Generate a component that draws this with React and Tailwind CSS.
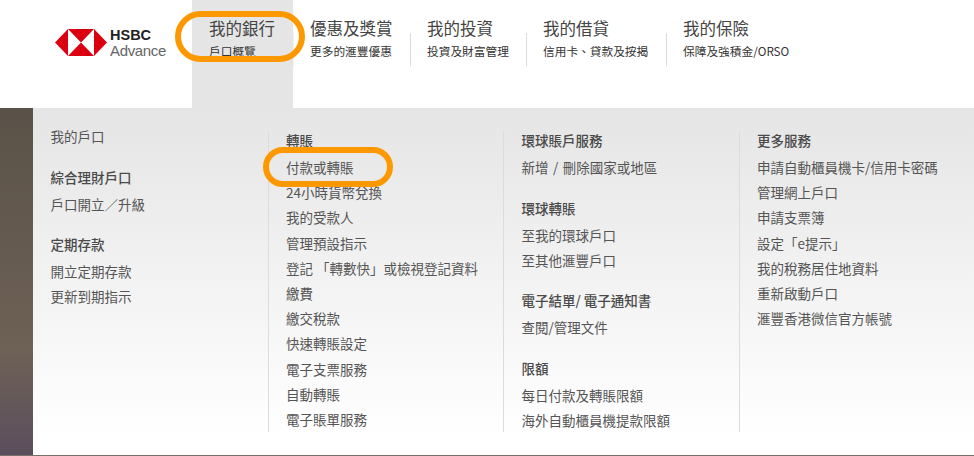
const navItems = [
  { title: "優惠及獎賞", sub: "更多的滙豐優惠", width: "w-[117px]" },
  { title: "我的投資", sub: "投資及財富管理", width: "w-[116px]" },
  { title: "我的借貸", sub: "信用卡、貸款及按揭", width: "w-[140px]" },
  { title: "我的保險", sub: "保障及強積金/ORSO", width: "w-[200px]" },
];

const transferLinks = [
  "付款或轉賬",
  "24小時貨幣兌換",
  "我的受款人",
  "管理預設指示",
  "登記 「轉數快」或檢視登記資料",
  "繳費",
  "繳交稅款",
  "快速轉賬設定",
  "電子支票服務",
  "自動轉賬",
  "電子賬單服務",
];

const moreLinks = [
  "申請自動櫃員機卡/信用卡密碼",
  "管理網上戶口",
  "申請支票簿",
  "設定「e提示」",
  "我的稅務居住地資料",
  "重新啟動戶口",
  "滙豐香港微信官方帳號",
];

const globalGroups = [
  { title: "環球賬戶服務", links: ["新增 / 刪除國家或地區"], gap: "mt-[-2px]" },
  { title: "環球轉賬", links: ["至我的環球戶口", "至其他滙豐戶口"], gap: "mt-[18px]" },
  { title: "電子結單/ 電子通知書", links: ["查閱/管理文件"], gap: "mt-[16px]" },
  { title: "限額", links: ["每日付款及轉賬限額", "海外自動櫃員機提款限額"], gap: "mt-[18px]" },
];

function Logo() {
  return (
    <div className="flex items-start gap-[3px]">
      <svg width="52" height="27" viewBox="0 0 52 27">
        <path d="M0 13.5 13 0v27z" fill="#db0011" />
        <path d="M52 13.5 39 0v27z" fill="#db0011" />
        <path d="M13 0h26L26 13.5z" fill="#db0011" />
        <path d="M13 27h26L26 13.5z" fill="#db0011" />
      </svg>
      <div className="mt-[-1px] font-['Liberation_Sans',sans-serif] leading-[15px]">
        <div className="text-[14.5px] font-bold text-[#222]">HSBC</div>
        <div className="text-[15px] tracking-[-0.35px] text-[#666]">Advance</div>
      </div>
    </div>
  );
}

function NavItem({ title, sub, width, divider }) {
  return (
    <div className={`flex ${width}`}>
      <div className={`mt-[33px] h-[33px] w-px ${divider ? "bg-[#dcdcdc]" : "bg-[#f0f0f0]"}`} />
      <div className="pl-[16px] pt-[15px]">
        <div className="text-[16.5px] leading-[26px] text-[#444]">{title}</div>
        <div className="mt-[2px] text-[11.7px] leading-[16px] text-[#333]">{sub}</div>
      </div>
    </div>
  );
}

function MenuColumn({ children }) {
  return (
    <div className="mt-[24px] h-[300px] w-[235.5px] border-l border-[#dcdcdc] pl-[17.5px] text-[13.5px] text-[#555]">
      {children}
    </div>
  );
}

function Heading({ children, className = "" }) {
  return <div className={`h-[25px] font-medium leading-[20px] text-[#4a4a4a] ${className}`}>{children}</div>;
}

function LinkRow({ children }) {
  return <div className="h-[25.2px] whitespace-nowrap leading-[25.2px]">{children}</div>;
}

export default function App() {
  return (
    <div className="relative h-[456px] w-[974px] overflow-hidden bg-white font-['Noto_Sans_CJK_TC',sans-serif]">
      <header className="flex h-[108px]">
        <div className="w-[192px] pl-[55px] pt-[29px]">
          <Logo />
        </div>
        <div className="w-[101px] bg-[#e5e5e5] pl-[17px] pt-[15px]">
          <div className="text-[16.5px] leading-[26px] text-[#444]">我的銀行</div>
          <div className="mt-[2px] text-[11.7px] leading-[16px] text-[#333]">戶口概覽</div>
        </div>
        {navItems.map((item, i) => (
          <NavItem key={item.title} {...item} divider={i > 0} />
        ))}
      </header>

      <div className="flex h-[347px]">
        <div className="w-[33px] bg-gradient-to-b from-[#5a5248] via-[#6e6156] via-70% to-[#5b4e5c]" />
        <div className="flex flex-1 bg-gradient-to-b from-[#e5e5e5] to-white to-95%">
          <div className="w-[235px] pl-[18px] pt-[18px] text-[13.5px] text-[#555]">
            <div className="leading-[20px]">我的戶口</div>
            <Heading className="mt-[21px]">綜合理財戶口</Heading>
            <div className="mt-[2px] leading-[20px]">戶口開立／升級</div>
            <Heading className="mt-[20px]">定期存款</Heading>
            <LinkRow>開立定期存款</LinkRow>
            <LinkRow>更新到期指示</LinkRow>
          </div>

          <MenuColumn>
            <Heading className="mt-[-2px]">轉賬</Heading>
            {transferLinks.map((link) => (
              <LinkRow key={link}>{link}</LinkRow>
            ))}
          </MenuColumn>

          <MenuColumn>
            {globalGroups.map((group) => (
              <div key={group.title} className={group.gap}>
                <Heading>{group.title}</Heading>
                <div className="[word-spacing:1.5px]">
                  {group.links.map((link) => (
                    <LinkRow key={link}>{link}</LinkRow>
                  ))}
                </div>
              </div>
            ))}
          </MenuColumn>

          <MenuColumn>
            <Heading className="mt-[-2px]">更多服務</Heading>
            {moreLinks.map((link) => (
              <LinkRow key={link}>{link}</LinkRow>
            ))}
          </MenuColumn>
        </div>
      </div>
      <div className="h-px bg-[#77706a]" />

      {/* orange annotation ovals */}
      <div className="absolute left-[175px] top-[11px] h-[51px] w-[130px] rounded-[26px] border-[6px] border-[#fd9800]" />
      <div className="absolute left-[263px] top-[147px] h-[40px] w-[130px] rounded-[20px] border-[6px] border-[#fd9800]" />
    </div>
  );
}
